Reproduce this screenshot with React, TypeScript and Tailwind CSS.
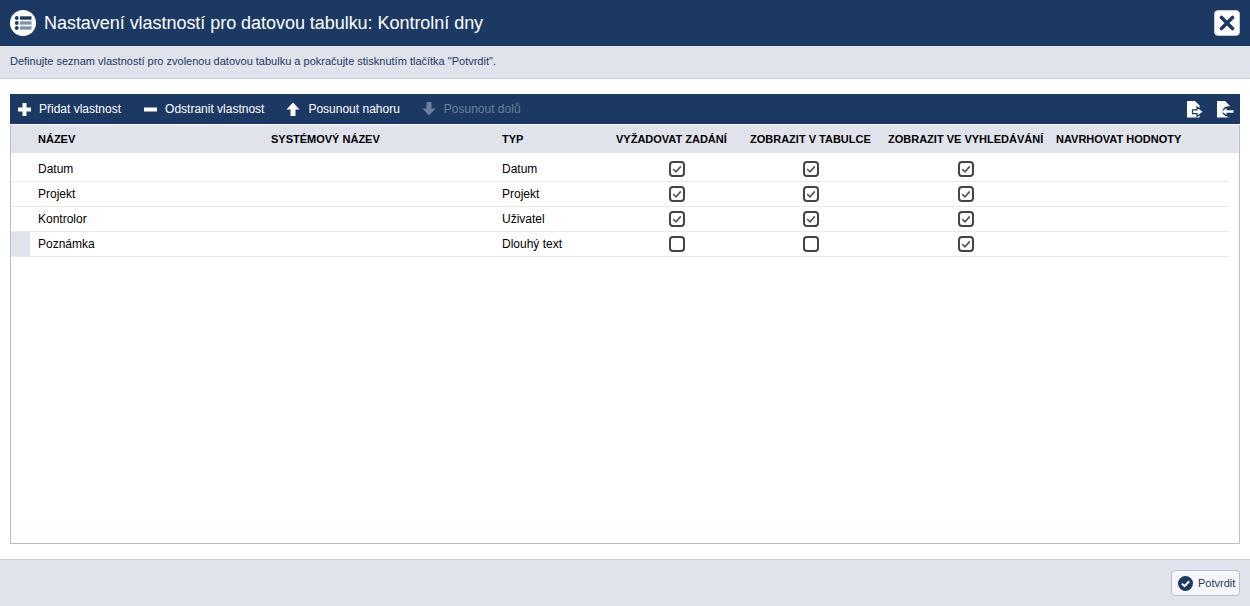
const rows = [
  { name: "Datum", type: "Datum", required: true, table: true, search: true },
  { name: "Projekt", type: "Projekt", required: true, table: true, search: true },
  { name: "Kontrolor", type: "Uživatel", required: true, table: true, search: true },
  { name: "Poznámka", type: "Dlouhý text", required: false, table: false, search: true },
];

const gridCols = "grid grid-cols-[19px_233px_231px_114px_138px_130px_180px_1fr]";

function Check({ checked }: { checked: boolean }) {
  return (
    <svg width="16" height="16" viewBox="0 0 16 16" fill="none">
      <rect x="1" y="1" width="14" height="14" rx="3" stroke="#444" strokeWidth="2" />
      {checked && <path d="M4.2 8.2 L7 10.8 L11.8 5.4" stroke="#555" strokeWidth="1.6" />}
    </svg>
  );
}

function ToolButton({ icon, label, disabled }: { icon: React.ReactNode; label: string; disabled?: boolean }) {
  return (
    <div className={"flex items-center gap-[8px] " + (disabled ? "text-[#6c7f9a]" : "text-white")}>
      {icon}
      <span>{label}</span>
    </div>
  );
}

function FileIcon({ left }: { left?: boolean }) {
  return (
    <svg width="17" height="17" viewBox="0 0 17 17">
      <path d="M0 0 H8 L12.5 4.5 V16.5 H0 Z" fill="white" />
      {left ? (
        <>
          <circle cx="10.5" cy="10.5" r="5" fill="#1c3963" />
          <rect x="10.5" y="5.5" width="6.5" height="11" fill="#1c3963" />
          <path d="M5 10.5 L9.5 7 V9.2 H16.5 V11.8 H9.5 V14 Z" fill="white" />
        </>
      ) : (
        <path d="M5.5 8.8 H10 V6 L16.5 10.7 L10 15.4 V12.6 H5.5 Z" fill="white" stroke="#1c3963" strokeWidth="1.2" />
      )}
    </svg>
  );
}

export default function App() {
  return (
    <div className="flex flex-col h-[606px] w-[1250px] overflow-hidden bg-white font-['Liberation_Sans',Arial,sans-serif] text-black">
      {/* Header */}
      <div className="h-[46px] bg-[#1c3963] flex items-center pl-[10px] pr-[10px] shrink-0">
        <svg width="26" height="26" viewBox="0 0 26 26" className="mr-[8px]">
          <circle cx="13" cy="13" r="13" fill="white" />
          <circle cx="6.8" cy="8" r="1.9" fill="#1c3963" />
          <circle cx="6.8" cy="13" r="1.9" fill="#1c3963" />
          <circle cx="6.8" cy="18" r="1.9" fill="#1c3963" />
          <rect x="10" y="6.3" width="11.5" height="3.4" fill="#1c3963" />
          <rect x="10" y="11.3" width="11.5" height="3.4" fill="#1c3963" opacity="0.55" />
          <rect x="10" y="16.3" width="11.5" height="3.4" fill="#1c3963" opacity="0.55" />
        </svg>
        <h1 className="text-[18px] tracking-[-0.04px] text-white">Nastavení vlastností pro datovou tabulku: Kontrolní dny</h1>
        <div className="ml-auto w-[26px] h-[26px] bg-white rounded-[4px] border border-[#c5cbd6] flex items-center justify-center">
          <svg width="16" height="16" viewBox="0 0 16 16">
            <path d="M2.5 2.5 L13.5 13.5 M13.5 2.5 L2.5 13.5" stroke="#1c3963" strokeWidth="3.6" strokeLinecap="round" />
          </svg>
        </div>
      </div>

      {/* Hint */}
      <div className="h-[33px] shrink-0 bg-[#e0e3ec] border-b border-[#c8cdd9] flex items-center pl-[10px] pb-[1px] text-[11px] text-[#1c3963]">
        Definujte seznam vlastností pro zvolenou datovou tabulku a pokračujte stisknutím tlačítka "Potvrdit".
      </div>

      {/* Content */}
      <div className="flex-1 flex flex-col px-[10px] pt-[15px] pb-[15px] min-h-0">
        <div className="h-[30px] shrink-0 bg-[#1c3963] flex items-center pl-[8px] pr-[6px] text-[12px] gap-[22px]">
          <div className="mr-[1px]">
            <ToolButton
              label="Přidat vlastnost"
              icon={
                <svg width="13" height="13" viewBox="0 0 13 13" fill="white">
                  <path d="M4.5 0 H8.5 V4.5 H13 V8.5 H8.5 V13 H4.5 V8.5 H0 V4.5 H4.5 Z" />
                </svg>
              }
            />
          </div>
          <ToolButton
            label="Odstranit vlastnost"
            icon={
              <svg width="13" height="13" viewBox="0 0 13 13" fill="white">
                <rect x="0" y="4.5" width="13" height="4" />
              </svg>
            }
          />
          <ToolButton
            label="Posunout nahoru"
            icon={
              <svg width="14" height="14" viewBox="0 0 14 14" fill="white">
                <path d="M7 0.5 L13.5 7.5 H9.5 V14 H4.5 V7.5 H0.5 Z" />
              </svg>
            }
          />
          <ToolButton
            label="Posunout dolů"
            disabled
            icon={
              <svg width="14" height="14" viewBox="0 0 14 14" fill="#6c7f9a">
                <path d="M7 13.5 L13.5 6.5 H9.5 V0 H4.5 V6.5 H0.5 Z" />
              </svg>
            }
          />
          <div className="ml-auto flex items-center gap-[13px]">
            <FileIcon />
            <FileIcon left />
          </div>
        </div>

        <div className="flex-1 border border-t-0 border-[#b8c0cd] min-h-0 mt-[1px]">
          <div className={gridCols + " h-[28px] bg-[#e0e3ec] items-center text-[11px] font-bold whitespace-nowrap"}>
            <div />
            <div className="pl-[8px]">NÁZEV</div>
            <div className="pl-[8px]">SYSTÉMOVÝ NÁZEV</div>
            <div className="pl-[8px]">TYP</div>
            <div className="pl-[8px]">VYŽADOVAT ZADÁNÍ</div>
            <div className="pl-[4px]">ZOBRAZIT V TABULCE</div>
            <div className="pl-[12px]">ZOBRAZIT VE VYHLEDÁVÁNÍ</div>
            <div>NAVRHOVAT HODNOTY</div>
          </div>
          <div className="mr-[10px] pt-[4px]">
            {rows.map((row, i) => (
              <div key={row.name} className={gridCols + " h-[25px] border-b border-[#e8eaef] items-center text-[12px]"}>
                <div className={"h-full " + (i === 3 ? "bg-[#e0e3ec]" : "")} />
                <div className="pl-[8px]">{row.name}</div>
                <div />
                <div className="pl-[8px]">{row.type}</div>
                <div className="flex justify-center"><Check checked={row.required} /></div>
                <div className="flex justify-center"><Check checked={row.table} /></div>
                <div className="flex justify-center"><Check checked={row.search} /></div>
                <div />
              </div>
            ))}
          </div>
        </div>
      </div>

      {/* Footer */}
      <div className="h-[47px] shrink-0 bg-[#e0e3ec] border-t border-[#c8cdd9] flex items-center justify-end pr-[10px]">
        <div className="h-[26px] w-[69px] bg-[#f5f6f9] border border-[#b8c0cd] rounded-[4px] flex items-center pl-[6px] gap-[5px] text-[11px] text-[#1c3963]">
          <svg width="15" height="15" viewBox="0 0 15 15">
            <circle cx="7.5" cy="7.5" r="7.5" fill="#1c3963" />
            <path d="M3.8 7.6 L6.5 10.2 L11.2 5.2" stroke="white" strokeWidth="2" fill="none" />
          </svg>
          <span>Potvrdit</span>
        </div>
      </div>
    </div>
  );
}
